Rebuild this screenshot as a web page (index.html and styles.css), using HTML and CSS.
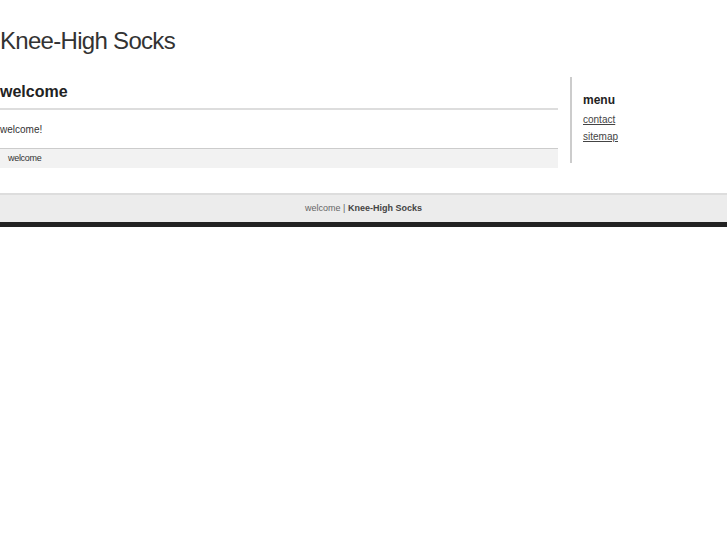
FILE: index.html
```html
<!DOCTYPE html>
<html>
<head>
<meta charset="utf-8">
<link rel="stylesheet" href="styles.css">
</head>
<body>
<header class="site-header">
  <h1 class="site-title">Knee-High Socks</h1>
</header>
<div class="wrap">
  <main class="main">
    <h2 class="page-title">welcome</h2>
    <div class="content"><p>welcome!</p></div>
    <div class="crumbs">welcome</div>
  </main>
  <aside class="sidebar">
    <h3 class="menu-title">menu</h3>
    <ul class="menu">
      <li><a href="#">contact</a></li>
      <li><a href="#">sitemap</a></li>
    </ul>
  </aside>
</div>
<footer class="footer">
  <div class="footer-inner">welcome | <strong>Knee-High Socks</strong></div>
</footer>
</body>
</html>
```
FILE: styles.css
```css
html, body { margin: 0; padding: 0; background: #fff; }
body { font-family: "Liberation Sans", Arial, sans-serif; color: #333; }
.site-header { padding-top: 27px; height: 50px; box-sizing: border-box; }
.site-title { margin: 0; font-size: 24px; font-weight: normal; color: #333; line-height: 28px; letter-spacing: -0.7px; }
.wrap { display: flex; margin-top: 27px; }
.main { width: 558px; }
.page-title { margin: 0; font-size: 16px; line-height: 28px; padding-top: 1px; padding-bottom: 2px; border-bottom: 2px solid #ddd; color: #222; }
.content { padding: 0; height: 38px; display: flex; align-items: center; border-bottom: 1px solid #ccc; }
.content p { margin: 0; font-size: 10px; color: #333; }
.crumbs { background: #f2f2f2; height: 19px; line-height: 19px; font-size: 9px; padding-left: 8px; color: #333; letter-spacing: -0.3px; }
.sidebar { margin-left: 12px; border-left: 2px solid #ccc; padding-left: 11px; height: 86px; margin-top: 0; }
.menu-title { margin: 15px 0 0 0; font-size: 12px; line-height: 16px; color: #222; }
.menu { list-style: none; margin: 3px 0 0 0; padding: 0; }
.menu li { font-size: 10px; line-height: 17px; }
.menu a { color: #444; text-decoration: underline; }
.footer { margin-top: 25px; border-top: 2px solid #ddd; background: #ececec; border-bottom: 5px solid #222; }
.footer-inner { height: 27px; line-height: 27px; text-align: center; font-size: 9px; color: #666; }
.footer-inner strong { color: #444; }
```
